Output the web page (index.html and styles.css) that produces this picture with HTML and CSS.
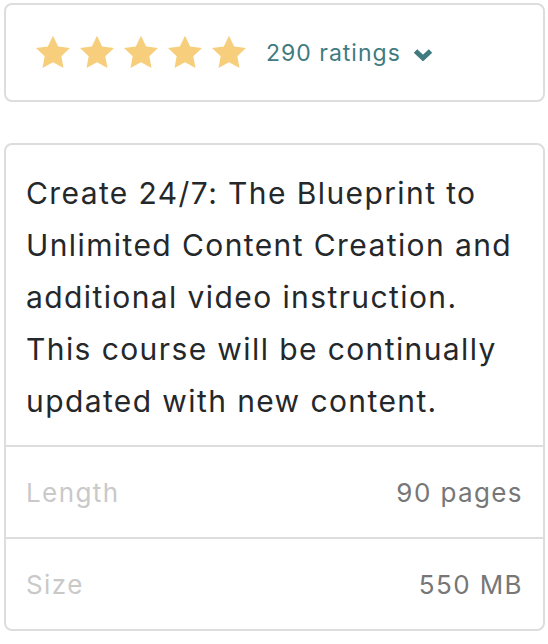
FILE: index.html
```html
<!DOCTYPE html>
<html lang="en">
<head>
    <meta charset="UTF-8">
    <meta name="viewport" content="width=device-width, initial-scale=1.0">
    <title>Course details</title>
    <link rel="stylesheet" href="styles.css">
</head>
<body>

<div class="card rating-card">
    <div class="stars">
        <svg class="star" viewBox="0 0 24 24"><path d="M12 1.6l3.1 6.5 7.1.9-5.2 4.9 1.3 7.1L12 17.6l-6.3 3.4 1.3-7.1L1.8 9l7.1-.9z"/></svg>
        <svg class="star" viewBox="0 0 24 24"><path d="M12 1.6l3.1 6.5 7.1.9-5.2 4.9 1.3 7.1L12 17.6l-6.3 3.4 1.3-7.1L1.8 9l7.1-.9z"/></svg>
        <svg class="star" viewBox="0 0 24 24"><path d="M12 1.6l3.1 6.5 7.1.9-5.2 4.9 1.3 7.1L12 17.6l-6.3 3.4 1.3-7.1L1.8 9l7.1-.9z"/></svg>
        <svg class="star" viewBox="0 0 24 24"><path d="M12 1.6l3.1 6.5 7.1.9-5.2 4.9 1.3 7.1L12 17.6l-6.3 3.4 1.3-7.1L1.8 9l7.1-.9z"/></svg>
        <svg class="star" viewBox="0 0 24 24"><path d="M12 1.6l3.1 6.5 7.1.9-5.2 4.9 1.3 7.1L12 17.6l-6.3 3.4 1.3-7.1L1.8 9l7.1-.9z"/></svg>
    </div>
    <span class="ratings">290 ratings</span>
    <svg class="chevron" viewBox="0 0 20 12"><path d="M2.5 2l7.5 7 7.5-7" /></svg>
</div>

<div class="card info-card">
    <p class="title">Create 24/7: The Blueprint to Unlimited Content Creation and additional video instruction. This course will be continually updated with new content.</p>
    <div class="row">
        <span class="label">Length</span>
        <span class="value">90 pages</span>
    </div>
    <div class="row">
        <span class="label">Size</span>
        <span class="value">550 MB</span>
    </div>
</div>

</body>
</html>
```

FILE: styles.css
```css
body {
    margin: 3px 3px 0 4px;
    font-family: Inter, "Noto Sans", sans-serif;
    background: white;
}
.card {
    border: 2px solid #dddddd;
    border-radius: 8px;
    background: white;
}
.rating-card {
    height: 95px;
    display: flex;
    align-items: center;
    padding-left: 27px;
}
.stars {
    display: flex;
    gap: 4px;
}
.star {
    width: 40px;
    height: 40px;
    fill: #f7cf7c;
}
.ratings {
    margin-left: 17px;
    font-size: 23px;
    letter-spacing: 1px;
    color: #3f7b80;
}
.chevron {
    width: 20px;
    height: 12px;
    margin-left: 12px;
    margin-top: 4px;
    fill: none;
    stroke: #3f7b80;
    stroke-width: 5;
}
.info-card {
    margin-top: 41px;
}
.title {
    margin: 0;
    padding: 22px 18px 18px 20px;
    font-size: 30px;
    line-height: 52px;
    letter-spacing: 1.4px;
    color: #25282b;
}
.row {
    display: flex;
    justify-content: space-between;
    align-items: center;
    height: 90px;
    padding: 0 20px 0 20px;
    border-top: 2px solid #dddddd;
    font-size: 26px;
    letter-spacing: 1.4px;
}
.label {
    color: #c9c9c9;
}
.value {
    color: #777777;
}
```
